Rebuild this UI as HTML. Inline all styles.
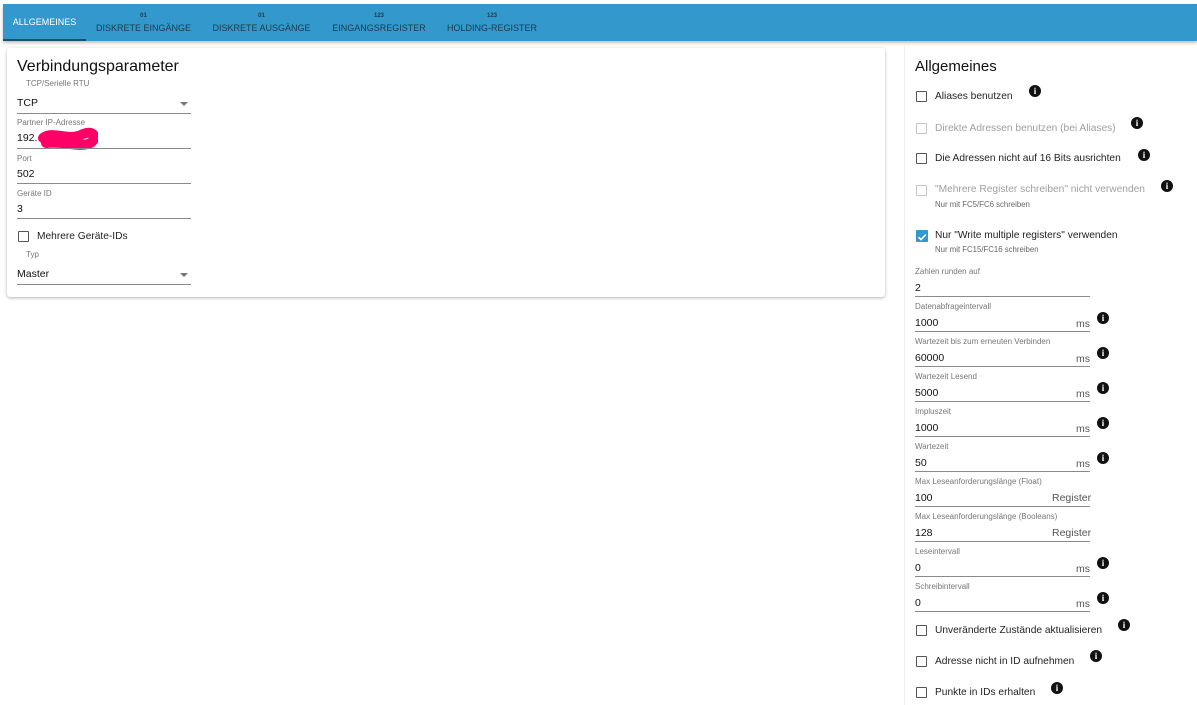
<!DOCTYPE html>
<html><head><meta charset="utf-8"><style>
*{box-sizing:border-box;margin:0;padding:0}
body{width:1197px;height:705px;overflow:hidden;background:#fff;font-family:"Liberation Sans",sans-serif;color:#222;position:relative}
.a{position:absolute;white-space:nowrap}
.tabs{position:absolute;left:3px;top:4px;width:1194px;height:37px;background:#3398cc;box-shadow:0 2px 3px rgba(0,0,0,.25)}
.tab{position:absolute;top:0;height:37px;color:#1d3a4c;font-size:9px;white-space:nowrap}
.tab .ic{position:absolute;top:9px;font-size:6px;width:100%;text-align:center;font-weight:bold}
.tab .t{position:absolute;top:19px;width:100%;text-align:center;white-space:nowrap}
.card{position:absolute;left:7px;top:48px;width:878px;height:249px;background:#fff;box-shadow:0 1px 3px rgba(0,0,0,.3);border-radius:3px}
.lbl{font-size:8px;color:#777}
.val{font-size:10.5px;color:#111}
.ln{position:absolute;height:1px;background:#8a8a8a}
.cb{position:absolute;width:11px;height:11px;border:1.5px solid #555;border-radius:1px}
.cb.d{border-color:#c4c4c4}
.cbt{font-size:10.2px;color:#222}
.cbt.d{color:#a0a0a0}
.sub{font-size:7.8px;color:#666}
.info{position:absolute;width:12px;height:12px;border-radius:50%;background:#111;color:#fff;font:bold 9px/12px "Liberation Serif",serif;text-align:center}
.unit{font-size:10.5px;color:#555}
.arr{position:absolute;width:0;height:0;border-left:4px solid transparent;border-right:4px solid transparent;border-top:4px solid #777}
</style></head><body>
<div class="tabs">
 <div class="tab" style="left:0;width:83px;background:#3398cc;color:#fff"><div class="t" style="top:13px">ALLGEMEINES</div><div style="position:absolute;left:0;bottom:0;width:83px;height:2px;background:#1d4e6e"></div></div>
 <div class="tab" style="left:80px;width:121px"><div class="ic">01</div><div class="t">DISKRETE EINGÄNGE</div></div>
 <div class="tab" style="left:199px;width:119px"><div class="ic">01</div><div class="t">DISKRETE AUSGÄNGE</div></div>
 <div class="tab" style="left:319px;width:114px"><div class="ic">123</div><div class="t">EINGANGSREGISTER</div></div>
 <div class="tab" style="left:437px;width:104px"><div class="ic">123</div><div class="t">HOLDING-REGISTER</div></div>
</div>
<div class="card"></div>
<div class="a" style="left:17px;top:58px;font-size:16px;color:#111">Verbindungsparameter</div>
<div class="a lbl" style="left:26px;top:79px">TCP/Serielle RTU</div>
<div class="a val" style="left:17px;top:97px">TCP</div><div class="arr" style="left:180px;top:102px"></div><div class="ln" style="left:17px;top:113px;width:174px"></div>
<div class="a lbl" style="left:17px;top:118px">Partner IP-Adresse</div>
<div class="a val" style="left:17px;top:132px">192.</div>
<svg class="a" style="left:38px;top:126px" width="60" height="24"><path d="M5 12 C15 4,30 16,45 8 C58 3,60 15,50 18 C40 21,25 15,8 17" stroke="#ff0066" stroke-width="10" fill="none" stroke-linecap="round"/></svg>
<div class="ln" style="left:17px;top:148px;width:174px"></div>
<div class="a lbl" style="left:17px;top:154px">Port</div>
<div class="a val" style="left:17px;top:168px">502</div><div class="ln" style="left:17px;top:183px;width:174px"></div>
<div class="a lbl" style="left:17px;top:189px">Geräte ID</div>
<div class="a val" style="left:17px;top:203px">3</div><div class="ln" style="left:17px;top:218px;width:174px"></div>
<div class="cb" style="left:18px;top:231px"></div><div class="a cbt" style="left:37px;top:231px">Mehrere Geräte-IDs</div>
<div class="a lbl" style="left:26px;top:250px">Typ</div>
<div class="a val" style="left:17px;top:268px">Master</div><div class="arr" style="left:180px;top:273px"></div><div class="ln" style="left:17px;top:284px;width:174px"></div>

<div style="position:absolute;left:904px;top:45px;width:1px;height:660px;background:#eee"></div>
<div class="a" style="left:915px;top:58px;font-size:15px;color:#111">Allgemeines</div>

<div class="cb" style="left:916px;top:91px"></div><div class="a cbt" style="left:935px;top:91px">Aliases benutzen</div><div class="info" style="left:1029px;top:85px">i</div>
<div class="cb d" style="left:916px;top:123px"></div><div class="a cbt d" style="left:935px;top:123px">Direkte Adressen benutzen (bei Aliases)</div><div class="info" style="left:1131px;top:117px">i</div>
<div class="cb" style="left:916px;top:153px"></div><div class="a cbt" style="left:935px;top:153px">Die Adressen nicht auf 16 Bits ausrichten</div><div class="info" style="left:1138px;top:149px">i</div>
<div class="cb d" style="left:916px;top:185px"></div><div class="a cbt d" style="left:935px;top:184px">"Mehrere Register schreiben" nicht verwenden</div><div class="info" style="left:1161px;top:180px">i</div>
<div class="a sub" style="left:935px;top:200px">Nur mit FC5/FC6 schreiben</div>
<div style="position:absolute;left:916px;top:230px;width:12px;height:12px;background:#3398cc;border-radius:1px"><svg width="12" height="12"><path d="M2.5 6.2 L5 8.6 L9.8 3.6" stroke="#fff" stroke-width="1.6" fill="none"/></svg></div>
<div class="a cbt" style="left:935px;top:230px">Nur "Write multiple registers" verwenden</div>
<div class="a sub" style="left:935px;top:245px">Nur mit FC15/FC16 schreiben</div>

<div class="a lbl" style="left:915px;top:267px">Zahlen runden auf</div>
<div class="a val" style="left:915px;top:282px">2</div><div class="ln" style="left:915px;top:296px;width:175px"></div>

<div class="a lbl" style="left:915px;top:302px">Datenabfrageintervall</div><div class="a val" style="left:915px;top:317px">1000</div><div class="a unit" style="left:1076px;top:318px">ms</div><div class="ln" style="left:915px;top:331px;width:175px"></div><div class="info" style="left:1097px;top:312px">i</div>
<div class="a lbl" style="left:915px;top:337px">Wartezeit bis zum erneuten Verbinden</div><div class="a val" style="left:915px;top:352px">60000</div><div class="a unit" style="left:1076px;top:353px">ms</div><div class="ln" style="left:915px;top:366px;width:175px"></div><div class="info" style="left:1097px;top:347px">i</div>
<div class="a lbl" style="left:915px;top:372px">Wartezeit Lesend</div><div class="a val" style="left:915px;top:387px">5000</div><div class="a unit" style="left:1076px;top:388px">ms</div><div class="ln" style="left:915px;top:401px;width:175px"></div><div class="info" style="left:1097px;top:382px">i</div>
<div class="a lbl" style="left:915px;top:407px">Impluszeit</div><div class="a val" style="left:915px;top:422px">1000</div><div class="a unit" style="left:1076px;top:423px">ms</div><div class="ln" style="left:915px;top:436px;width:175px"></div><div class="info" style="left:1097px;top:417px">i</div>
<div class="a lbl" style="left:915px;top:442px">Wartezeit</div><div class="a val" style="left:915px;top:457px">50</div><div class="a unit" style="left:1076px;top:458px">ms</div><div class="ln" style="left:915px;top:471px;width:175px"></div><div class="info" style="left:1097px;top:452px">i</div>
<div class="a lbl" style="left:915px;top:477px">Max Leseanforderungslänge (Float)</div><div class="a val" style="left:915px;top:492px">100</div><div class="a unit" style="left:1052px;top:492px">Register</div><div class="ln" style="left:915px;top:506px;width:175px"></div>
<div class="a lbl" style="left:915px;top:512px">Max Leseanforderungslänge (Booleans)</div><div class="a val" style="left:915px;top:527px">128</div><div class="a unit" style="left:1052px;top:527px">Register</div><div class="ln" style="left:915px;top:541px;width:175px"></div>
<div class="a lbl" style="left:915px;top:547px">Leseintervall</div><div class="a val" style="left:915px;top:562px">0</div><div class="a unit" style="left:1076px;top:563px">ms</div><div class="ln" style="left:915px;top:576px;width:175px"></div><div class="info" style="left:1097px;top:557px">i</div>
<div class="a lbl" style="left:915px;top:582px">Schreibintervall</div><div class="a val" style="left:915px;top:597px">0</div><div class="a unit" style="left:1076px;top:598px">ms</div><div class="ln" style="left:915px;top:611px;width:175px"></div><div class="info" style="left:1097px;top:592px">i</div>

<div class="cb" style="left:916px;top:625px"></div><div class="a cbt" style="left:935px;top:625px">Unveränderte Zustände aktualisieren</div><div class="info" style="left:1118px;top:619px">i</div>
<div class="cb" style="left:916px;top:656px"></div><div class="a cbt" style="left:935px;top:656px">Adresse nicht in ID aufnehmen</div><div class="info" style="left:1090px;top:650px">i</div>
<div class="cb" style="left:916px;top:687px"></div><div class="a cbt" style="left:935px;top:687px">Punkte in IDs erhalten</div><div class="info" style="left:1051px;top:682px">i</div>
</body></html>
